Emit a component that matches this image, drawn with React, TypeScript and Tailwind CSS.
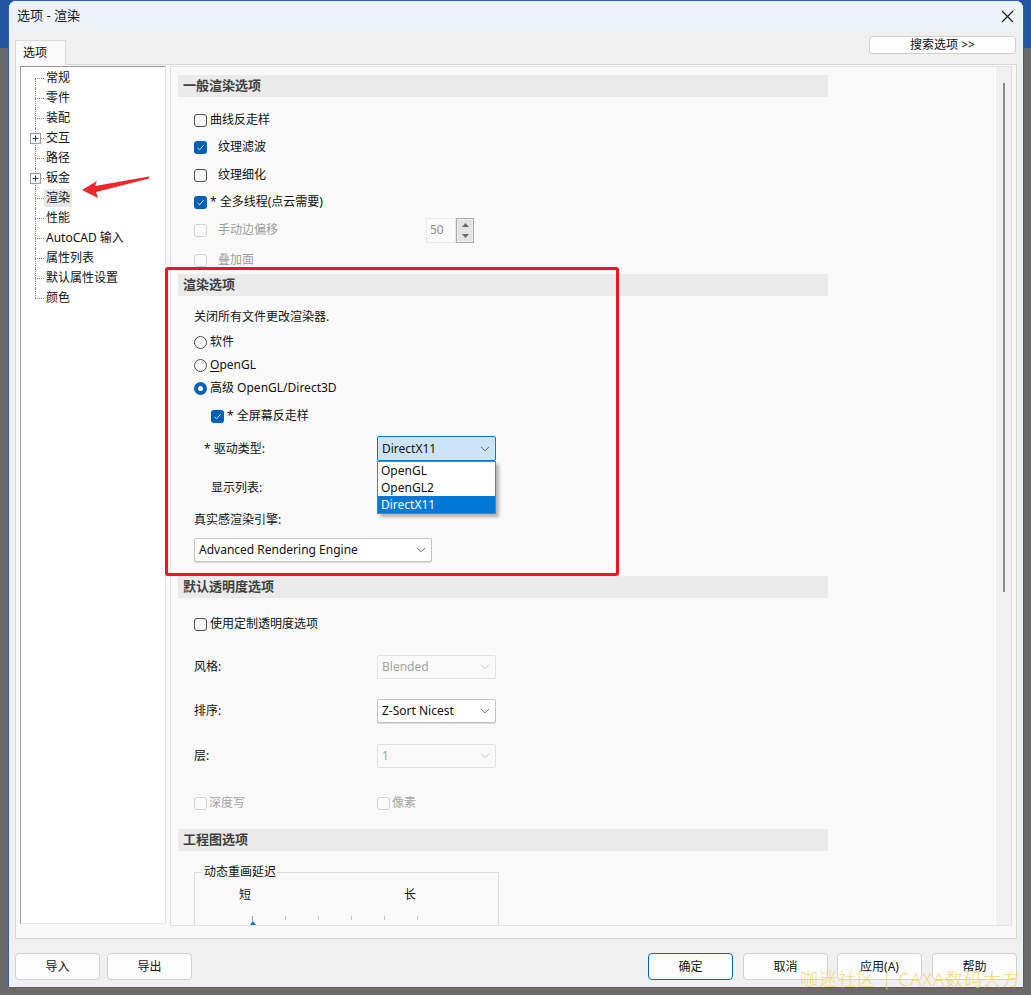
import React from "react";

const FONT = "font-['Noto_Sans','Noto_Sans_CJK_SC',sans-serif]";

function Check({ checked = false, disabled = false }: { checked?: boolean; disabled?: boolean }) {
  if (checked) {
    return (
      <span className="w-[13px] h-[13px] rounded-[3px] bg-[#005fb8] flex items-center justify-center shrink-0">
        <svg width="9" height="9" viewBox="0 0 9 9">
          <path d="M1.5 4.8 L3.6 6.8 L7.6 2.2" fill="none" stroke="#dbe8f6" strokeWidth="1" />
        </svg>
      </span>
    );
  }
  return (
    <span
      className={
        disabled
          ? "w-[13px] h-[13px] rounded-[3px] border border-[#d0d0d0] bg-[#fafafa] shrink-0"
          : "w-[13px] h-[13px] rounded-[3px] border border-[#4f4f4f] bg-[#f7f7f7] shrink-0"
      }
    />
  );
}

function Radio({ on = false }: { on?: boolean }) {
  if (on) {
    return (
      <span className="w-[13px] h-[13px] rounded-full bg-[#005fb8] flex items-center justify-center shrink-0">
        <span className="w-[5px] h-[5px] rounded-full bg-white" />
      </span>
    );
  }
  return <span className="w-[13px] h-[13px] rounded-full border border-[#4f4f4f] bg-[#f7f7f7] shrink-0" />;
}

function Chevron({ color = "#5f5f5f" }: { color?: string }) {
  return (
    <svg width="10" height="6" viewBox="0 0 10 6">
      <path d="M1 0.8 L5 4.8 L9 0.8" fill="none" stroke={color} strokeWidth="1" />
    </svg>
  );
}

function Select({
  text,
  disabled = false,
  focused = false,
  className = "",
}: {
  text: string;
  disabled?: boolean;
  focused?: boolean;
  className?: string;
}) {
  let cls = "h-full flex items-center justify-between pl-[4px] pr-[5px] rounded-[2px] border ";
  if (focused) cls += "bg-[#cce4f7] border-[#0078d7] text-[#111]";
  else if (disabled) cls += "bg-[#f9f9f9] border-[#e2e2e2] text-[#a3a3a3]";
  else cls += "bg-white border-[#c3c3c3] shadow-[0_1px_0_#d9d9d9] text-[#111]";
  return (
    <div className={cls + " " + className}>
      <span className="text-[12px] leading-none">{text}</span>
      <Chevron color={disabled ? "#c9c9c9" : "#5f5f5f"} />
    </div>
  );
}

function Header({ title, className }: { title: string; className: string }) {
  return (
    <div
      className={
        "h-[22px] w-[650px] bg-[#eaeaea] flex items-center pl-[5px] text-[13px] font-bold text-[#3f3f3f] " +
        className
      }
    >
      {title}
    </div>
  );
}

const treeItems: { label: string; plus?: boolean; sel?: boolean }[] = [
  { label: "常规" },
  { label: "零件" },
  { label: "装配" },
  { label: "交互", plus: true },
  { label: "路径" },
  { label: "钣金", plus: true },
  { label: "渲染", sel: true },
  { label: "性能" },
  { label: "AutoCAD 输入" },
  { label: "属性列表" },
  { label: "默认属性设置" },
  { label: "颜色" },
];

function Tree() {
  return (
    <div className="w-[146px] h-[858px] pt-[1px] bg-white border-t border-l border-[#9a9a9a] border-r border-b border-r-[#e4e4e4] border-b-[#e4e4e4] shrink-0">
      {treeItems.map((it, i) => {
        const first = i === 0;
        const last = i === treeItems.length - 1;
        return (
          <div key={it.label} className="relative h-[20px] flex items-center">
            <span
              className={
                "absolute left-[14px] w-0 border-l border-dotted border-[#8c8c8c] " +
                (first ? "top-[10px] bottom-0" : last ? "top-0 h-[10px]" : "top-0 bottom-0")
              }
            />
            <span className="absolute left-[14px] top-[10px] w-[9px] h-0 border-t border-dotted border-[#8c8c8c]" />
            {it.plus && (
              <span className="absolute left-[9px] top-[5px] w-[11px] h-[11px] border border-[#9b9b9b] bg-white flex items-center justify-center">
                <svg width="7" height="7" viewBox="0 0 7 7">
                  <path d="M0.5 3.5 H6.5 M3.5 0.5 V6.5" stroke="#27408b" strokeWidth="1" />
                </svg>
              </span>
            )}
            <span
              className={
                "ml-[23px] px-[2px] h-[18px] flex items-center text-[12px] text-[#111] " +
                (it.sel ? "bg-[#e6e6e6]" : "")
              }
            >
              {it.label}
            </span>
          </div>
        );
      })}
    </div>
  );
}

function Content() {
  return (
    <div className="w-[842px] h-[860px] bg-[#f9f9f9] border border-[#e2e2e2] flex shrink-0">
      <div className="flex-1 h-full overflow-hidden pl-[7px] pt-[8px] text-[12px] text-[#111]">
        <Header title="一般渲染选项" className="" />
        <div className="ml-[16px] mt-[13px] h-[20px] flex items-center gap-[3px]">
          <Check />
          <span>曲线反走样</span>
        </div>
        <div className="ml-[16px] mt-[7px] h-[20px] flex items-center gap-[11px]">
          <Check checked />
          <span>纹理滤波</span>
        </div>
        <div className="ml-[16px] mt-[8px] h-[20px] flex items-center gap-[11px]">
          <Check />
          <span>纹理细化</span>
        </div>
        <div className="ml-[16px] mt-[7px] h-[20px] flex items-center gap-[3px]">
          <Check checked />
          <span>* 全多线程(点云需要)</span>
        </div>
        <div className="ml-[16px] mt-[5px] h-[26px] flex items-center">
          <Check disabled />
          <span className="ml-[11px] w-[208px] text-[#9d9d9d]">手动边偏移</span>
          <div className="h-[25px] w-[48px] flex">
            <div className="flex-1 border border-[#e8e8e8] bg-[#fafafa] flex items-center pl-[3px] text-[12px] text-[#8a8a8a]">
              50
            </div>
            <div className="w-[18px] border border-[#a9a9a9] bg-[#ececec] flex flex-col p-[1px] gap-[1px]">
              <div className="flex-1 bg-[#e3e3e3] flex items-center justify-center">
                <svg width="7" height="4" viewBox="0 0 7 4">
                  <path d="M0 4 L3.5 0 L7 4 Z" fill="#6a6a6a" />
                </svg>
              </div>
              <div className="flex-1 bg-[#e3e3e3] flex items-center justify-center">
                <svg width="7" height="4" viewBox="0 0 7 4">
                  <path d="M0 0 L3.5 4 L7 0 Z" fill="#6a6a6a" />
                </svg>
              </div>
            </div>
          </div>
        </div>
        <div className="ml-[16px] mt-[7px] h-[20px] flex items-center gap-[11px]">
          <Check disabled />
          <span className="text-[#9d9d9d]">叠加面</span>
        </div>

        <Header title="渲染选项" className="mt-[4px]" />
        <div className="ml-[16px] mt-[11px] h-[20px] flex items-center">关闭所有文件更改渲染器.</div>
        <div className="ml-[16px] mt-[5px] h-[20px] flex items-center gap-[3px]">
          <Radio />
          <span>软件</span>
        </div>
        <div className="ml-[16px] mt-[3px] h-[20px] flex items-center gap-[3px]">
          <Radio />
          <span>
            <span className="underline underline-offset-2">O</span>penGL
          </span>
        </div>
        <div className="ml-[16px] mt-[3px] h-[20px] flex items-center gap-[3px]">
          <Radio on />
          <span>高级 OpenGL/Direct3D</span>
        </div>
        <div className="ml-[33px] mt-[8px] h-[20px] flex items-center gap-[3px]">
          <Check checked />
          <span>* 全屏幕反走样</span>
        </div>
        <div className="ml-[16px] mt-[10px] h-[25px] flex items-center">
          <span className="w-[183px] pl-[10px]">* 驱动类型:</span>
          <div className="relative w-[119px] h-full">
            <Select text="DirectX11" focused />
            <div className="absolute left-0 top-[25px] w-[119px] bg-white border border-[#7a7a7a] shadow-[3px_3px_3px_rgba(0,0,0,0.28)] flex flex-col z-10">
              <div className="h-[17px] flex items-center pl-[3px] text-[12px]">OpenGL</div>
              <div className="h-[17px] flex items-center pl-[3px] text-[12px]">OpenGL2</div>
              <div className="h-[17px] flex items-center pl-[3px] text-[12px] bg-[#0078d7] text-white">DirectX11</div>
            </div>
          </div>
        </div>
        <div className="ml-[33px] mt-[17px] h-[20px] flex items-center">显示列表:</div>
        <div className="ml-[16px] mt-[12px] h-[20px] flex items-center">真实感渲染引擎:</div>
        <div className="ml-[16px] mt-[8px] h-[24px] w-[238px]">
          <Select text="Advanced Rendering Engine" />
        </div>

        <Header title="默认透明度选项" className="mt-[14px]" />
        <div className="ml-[16px] mt-[16px] h-[20px] flex items-center gap-[3px]">
          <Check />
          <span>使用定制透明度选项</span>
        </div>
        <div className="ml-[16px] mt-[21px] h-[24px] flex items-center">
          <span className="w-[183px]">风格:</span>
          <div className="w-[119px] h-full">
            <Select text="Blended" disabled />
          </div>
        </div>
        <div className="ml-[16px] mt-[20px] h-[24px] flex items-center">
          <span className="w-[183px]">排序:</span>
          <div className="w-[119px] h-full">
            <Select text="Z-Sort Nicest" />
          </div>
        </div>
        <div className="ml-[16px] mt-[21px] h-[24px] flex items-center">
          <span className="w-[183px]">层:</span>
          <div className="w-[119px] h-full">
            <Select text="1" disabled />
          </div>
        </div>
        <div className="ml-[16px] mt-[25px] h-[20px] flex items-center text-[#a3a3a3]">
          <div className="w-[183px] flex items-center gap-[2px]">
            <Check disabled />
            <span>深度写</span>
          </div>
          <div className="flex items-center gap-[2px]">
            <Check disabled />
            <span>像素</span>
          </div>
        </div>

        <Header title="工程图选项" className="mt-[16px]" />
        <div className="relative ml-[16px] mt-[21px] w-[305px] h-[120px] border border-[#dcdcdc]">
          <span className="absolute left-[8px] top-[-9px] px-[1px] bg-[#f9f9f9] text-[12px] leading-[16px]">
            动态重画延迟
          </span>
          <div className="mt-[13px] h-[18px] flex items-center">
            <span className="ml-[44px]">短</span>
            <span className="ml-[153px]">长</span>
          </div>
          <div className="mt-[12px] ml-[57px] flex gap-[32px] h-[5px]">
            <span className="w-[1px] h-[5px] bg-[#a0a0a0]" />
            <span className="w-[1px] h-[4px] bg-[#c4c4c4]" />
            <span className="w-[1px] h-[4px] bg-[#c4c4c4]" />
            <span className="w-[1px] h-[4px] bg-[#c4c4c4]" />
            <span className="w-[1px] h-[4px] bg-[#c4c4c4]" />
            <span className="w-[1px] h-[4px] bg-[#c4c4c4]" />
          </div>
          <div className="ml-[55px] h-[4px] flex">
            <svg width="6" height="4" viewBox="0 0 6 4">
              <path d="M0 4 L3 0 L6 4 Z" fill="#1f6fd0" />
            </svg>
          </div>
        </div>
      </div>
      <div className="w-[16px] h-full bg-[#f0f0f0] border-l border-white flex justify-center shrink-0">
        <div className="mt-[16px] w-[2px] h-[509px] bg-[#8a8a8a]" />
      </div>
    </div>
  );
}

function Btn({ label, primary = false, className = "" }: { label: React.ReactNode; primary?: boolean; className?: string }) {
  return (
    <div
      className={
        "w-[85px] h-[27px] rounded-[4px] flex items-center justify-center text-[12px] text-[#111] bg-[#fdfdfd] " +
        (primary ? "border border-[#0067c0]" : "border border-[#d1d1d1]") +
        " " +
        className
      }
    >
      {label}
    </div>
  );
}

export default function App() {
  return (
    <div className={"relative w-[1031px] h-[995px] overflow-hidden bg-[#6a6a6a] " + FONT}>
      <div className="absolute left-0 top-0 w-[1031px] h-[48px] bg-[#2456a0]" />
      <div className="relative ml-[8px] w-[1016px] h-[988px] bg-[#f0f0f0] border border-[#2a63b6] rounded-t-[8px] overflow-hidden flex flex-col">
        {/* title bar */}
        <div className="h-[30px] bg-[#eef2f9] flex items-center justify-between pl-[8px] pr-[9px] shrink-0">
          <span className="text-[13px] text-[#1a1a1a]">选项 - 渲染</span>
          <svg width="13" height="13" viewBox="0 0 13 13">
            <path d="M1 1 L12 12 M12 1 L1 12" stroke="#222" strokeWidth="1.2" />
          </svg>
        </div>
        {/* tabs row */}
        <div className="h-[33px] flex items-start shrink-0">
          <div className="ml-[6px] mt-[9px] w-[51px] h-[25px] bg-[#f9f9f9] border-t border-l border-r border-[#d9d9d9] flex items-center pl-[7px] text-[12px] text-[#111] relative z-10">
            选项
          </div>
          <div className="ml-auto mr-[7px] mt-[5px] w-[147px] h-[18px] rounded-[3px] bg-[#fdfdfd] border border-[#cfcfcf] flex items-center justify-center text-[12px] text-[#111]">
            搜索选项 &gt;&gt;
          </div>
        </div>
        {/* tab panel */}
        <div className="ml-[6px] mr-[6px] h-[875px] bg-[#f8f8f8] border border-[#d9d9d9] pl-[4px] pt-[1px] flex gap-[4px] shrink-0">
          <Tree />
          <Content />
        </div>
        {/* buttons */}
        <div className="mt-[14px] flex items-center px-[6px]">
          <Btn label="导入" />
          <Btn label="导出" className="ml-[7px]" />
          <Btn label="确定" primary className="ml-auto" />
          <Btn label="取消" className="ml-[10px]" />
          <Btn label="应用(A)" className="ml-[9px]" />
          <Btn label="帮助" className="ml-[10px]" />
        </div>
      </div>

      {/* red annotation rectangle */}
      <div className="absolute left-[165px] top-[267px] w-[454px] h-[309px] border-[3px] border-[#f4141b] rounded-[3px] pointer-events-none" />

      {/* red arrow */}
      <svg className="absolute left-[78px] top-[170px]" width="76" height="32" viewBox="78 170 76 32">
        <path d="M82 190 L97 181 L95 186 L149 176.5 L149 178.5 L96 192 L98 198 Z" fill="#f0262b" />
      </svg>

      {/* watermark */}
      <div className="absolute left-[800px] top-[968px] text-[18px] leading-[22px] tracking-[1px] text-[#f6cf52] opacity-75 font-light whitespace-nowrap">
        咖迷社区 | CAXA数码大方
      </div>
    </div>
  );
}
